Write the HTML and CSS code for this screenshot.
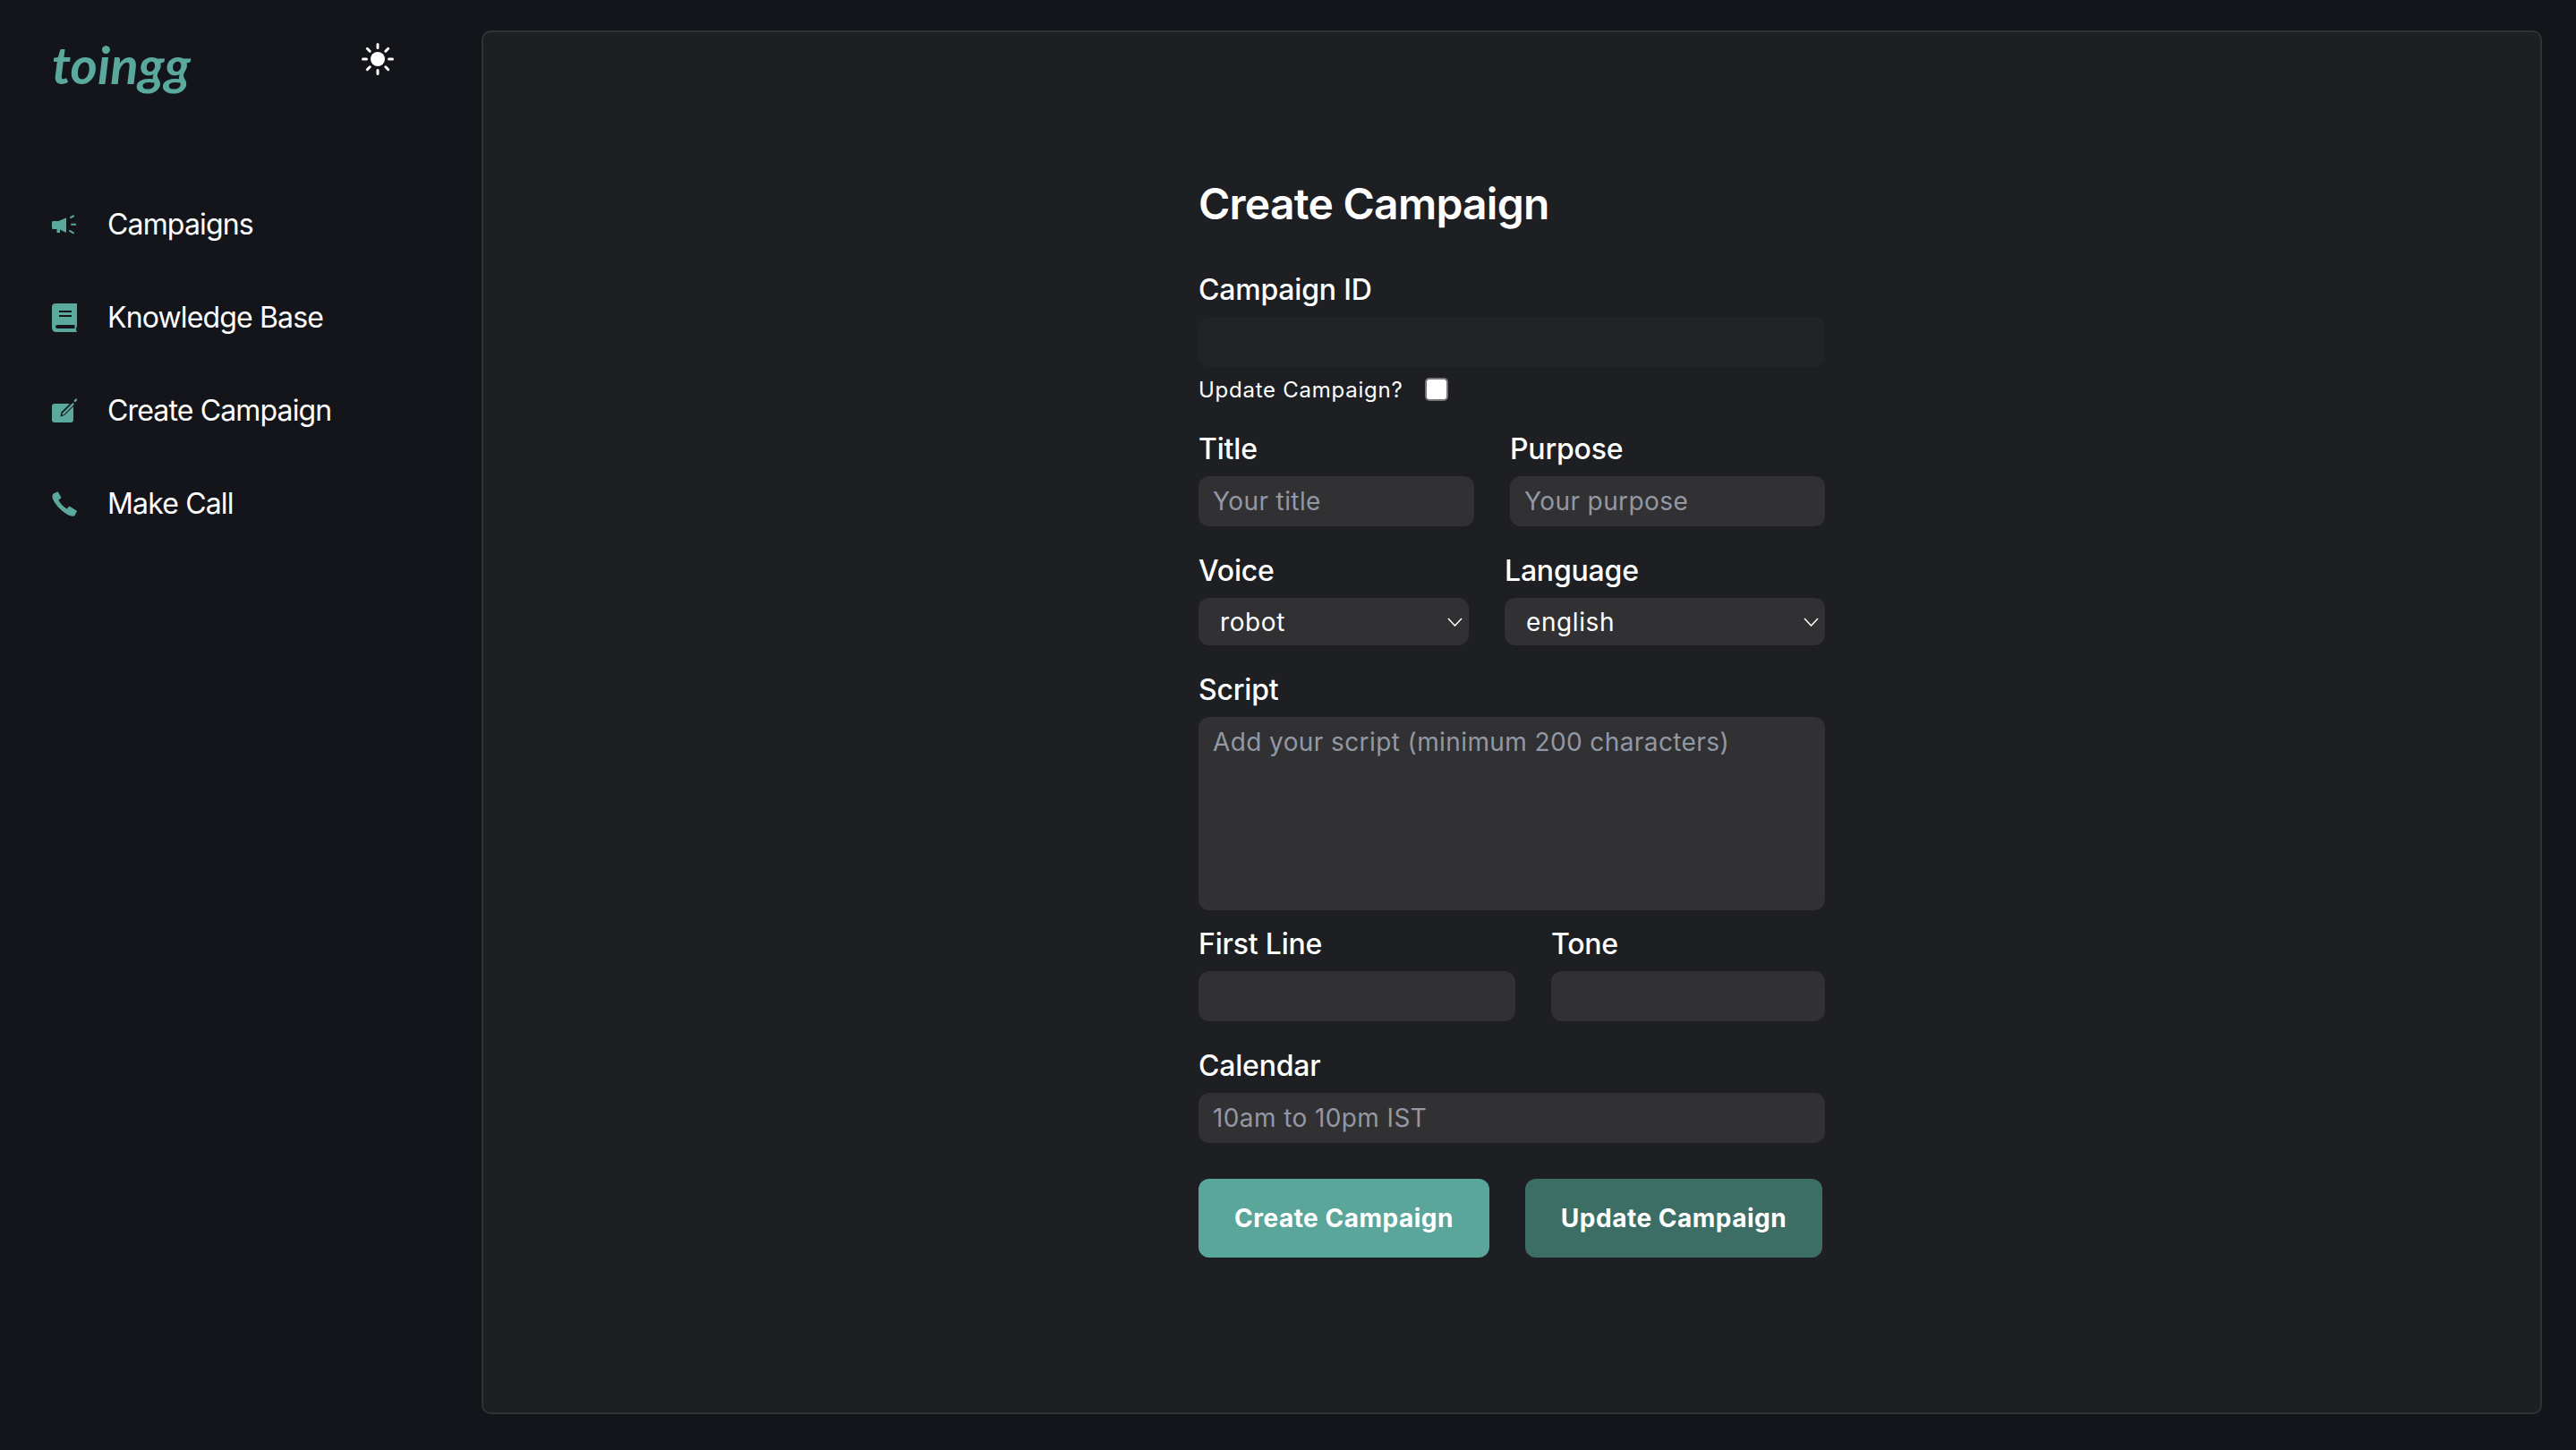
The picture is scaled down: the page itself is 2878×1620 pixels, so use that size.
FILE: index.html
```html
<!DOCTYPE html>
<html lang="en">
<head>
    <meta charset="UTF-8">
    <meta name="viewport" content="width=device-width, initial-scale=1.0">
    <title>toingg - Create Campaign</title>
    <link rel="stylesheet" href="styles.css">
</head>
<body>
    <div class="app">
        <aside class="sidebar">
            <div class="brand-row">
                <span class="logo">toingg</span>
                <svg class="sun" viewBox="0 0 36 36" aria-hidden="true">
                    <circle cx="18" cy="18" r="8" fill="#fff"/>
                    <g stroke="#fff" stroke-width="3" stroke-linecap="round">
                        <path d="M18 1.5v4M18 30.5v4M1.5 18h4M30.500 18h4M6.300 6.300l2.900 2.900M26.800 26.800l2.900 2.900M6.300 29.700l2.900-2.900M26.800 9.200l2.900-2.900"/>
                    </g>
                </svg>
            </div>
            <nav class="nav">
                <a class="nav-item">
                    <svg class="nav-icon" viewBox="0 0 28 28" aria-hidden="true">
                        <path class="fill" d="M1 10h6.500L16 6.300V23l-7-3.500V23H5.500v-4H1.500Q0 19 0 17.500v-6Q0 10 1 10z"/>
                        <path class="rays" d="M20.300 6.300L24.700 4M21.300 13.700H27M19.300 20.700l5.400 3"/>
                    </svg>
                    <span>Campaigns</span>
                </a>
                <a class="nav-item">
                    <svg class="nav-icon nav-icon-tall" viewBox="0 0 28 32" aria-hidden="true">
                        <path class="fill" d="M4 0h24v25.500q-1 1.500-1 3 0 1.500 1 3.500H5q-5 0-5-5V4q0-4 4-4z"/>
                        <path class="cut" d="M8 8h14v2H8zM8 13h14v2H8zM6 24h19.500v4H6q-2 0-2-2t2-2z"/>
                    </svg>
                    <span>Knowledge Base</span>
                </a>
                <a class="nav-item">
                    <svg class="nav-icon" viewBox="0 0 28 28" aria-hidden="true">
                        <rect class="fill" x="0" y="6" width="24" height="21" rx="3"/>
                        <path class="pen-edge" d="M9.500 20.500l1-5L22 4l3.500 3.500L14 19z"/>
                        <path class="pen-core" d="M12.500 17.500L23.500 6.500"/>
                        <path class="pen-tip" d="M25.800 2.800l1.200-1.200"/>
                    </svg>
                    <span>Create Campaign</span>
                </a>
                <a class="nav-item">
                    <svg class="nav-icon" viewBox="0 0 28 28" aria-hidden="true">
                        <path class="fill phone" d="M1.500 3L6.500 .8 10 7 6.800 9.800Q10 16 16.500 20L19.500 17 27.500 22 25 27Q22 27.800 18 25.800 6 19 1.200 8 .5 5 1.500 3z"/>
                    </svg>
                    <span>Make Call</span>
                </a>
            </nav>
        </aside>

        <main class="panel">
            <form class="form">
                <h1 class="form-title">Create Campaign</h1>

                <div class="field">
                    <label class="label">Campaign ID</label>
                    <input class="input input-disabled" type="text" disabled>
                </div>
                <div class="check-row">
                    <label class="check-label">Update Campaign?</label>
                    <span class="checkbox"></span>
                </div>

                <div class="row row-title">
                    <div class="field">
                        <label class="label">Title</label>
                        <input class="input" type="text" placeholder="Your title">
                    </div>
                    <div class="field">
                        <label class="label">Purpose</label>
                        <input class="input" type="text" placeholder="Your purpose">
                    </div>
                </div>

                <div class="row row-voice">
                    <div class="field">
                        <label class="label">Voice</label>
                        <select class="select"><option>robot</option></select>
                    </div>
                    <div class="field">
                        <label class="label">Language</label>
                        <select class="select"><option>english</option></select>
                    </div>
                </div>

                <div class="field field-script">
                    <label class="label">Script</label>
                    <textarea class="input textarea" placeholder="Add your script (minimum 200 characters)"></textarea>
                </div>

                <div class="row row-first">
                    <div class="field">
                        <label class="label">First Line</label>
                        <input class="input" type="text">
                    </div>
                    <div class="field">
                        <label class="label">Tone</label>
                        <input class="input" type="text">
                    </div>
                </div>

                <div class="field field-calendar">
                    <label class="label">Calendar</label>
                    <input class="input" type="text" placeholder="10am to 10pm IST">
                </div>

                <div class="actions">
                    <button class="btn btn-create" type="button">Create Campaign</button>
                    <button class="btn btn-update" type="button">Update Campaign</button>
                </div>
            </form>
        </main>
    </div>
</body>
</html>
```

FILE: styles.css
```css
* {
    margin: 0;
    padding: 0;
    box-sizing: border-box;
}

html, body {
    height: 100%;
}

body {
    font-family: Inter, 'Liberation Sans', sans-serif;
    color: #fff;
    background: #13151a;
    overflow: hidden;
}

.app {
    display: flex;
    height: 100vh;
    padding: 34px 38px 40px 0;
}

.sidebar {
    width: 538px;
    flex-shrink: 0;
    padding-left: 58px;
}

.brand-row {
    display: flex;
    align-items: flex-start;
    justify-content: space-between;
    width: 382px;
    height: 66px;
}

.logo {
    margin-top: 8px;
    font-family: Lato, sans-serif;
    font-style: italic;
    font-weight: 700;
    font-size: 58px;
    line-height: 60px;
    color: #5aa99c;
}

.sun {
    width: 36px;
    height: 36px;
    margin-top: 14px;
}

.nav {
    display: flex;
    flex-direction: column;
    margin-top: 99px;
}

.nav-item {
    display: flex;
    align-items: center;
    gap: 34px;
    height: 104px;
    font-size: 32px;
    line-height: 48px;
    letter-spacing: -0.85px;
}

.nav-icon {
    width: 28px;
    height: 28px;
    flex-shrink: 0;
}

.nav-icon-tall {
    height: 32px;
}

.fill {
    fill: #5aa99c;
}

.rays {
    fill: none;
    stroke: #5aa99c;
    stroke-width: 2;
}

.cut {
    fill: #13151a;
}

.pen-edge {
    fill: #13151a;
}

.pen-core, .pen-tip {
    fill: none;
    stroke: #5aa99c;
    stroke-width: 2.4;
    stroke-linecap: round;
}

.phone {
    stroke: #5aa99c;
    stroke-width: 1;
    stroke-linejoin: round;
}

.panel {
    flex: 1;
    display: flex;
    justify-content: center;
    align-items: flex-start;
    padding-top: 158px;
    background: #1d1f23;
    border: 2px solid #303236;
    border-radius: 10px;
}

.form {
    width: 700px;
}

.form-title {
    font-size: 48px;
    line-height: 68px;
    font-weight: 600;
    letter-spacing: -0.75px;
    margin-bottom: 36px;
}

.field {
    display: flex;
    flex-direction: column;
}

.label {
    font-size: 32px;
    line-height: 52px;
    font-weight: 450;
    letter-spacing: -0.2px;
    margin-bottom: 4px;
}

.input, .select {
    width: 100%;
    height: 56px;
    border: none;
    outline: none;
    border-radius: 12px;
    background-color: #313133;
    color: #fff;
    font-family: Inter, 'Liberation Sans', sans-serif;
    font-size: 28px;
    letter-spacing: 0.4px;
    padding: 0 16px;
}

.input::placeholder {
    color: #9298a4;
    opacity: 1;
}

.input-disabled {
    background-color: #222326;
}

.select {
    height: 53px;
    padding: 0 24px;
    letter-spacing: 0.6px;
    appearance: none;
    background-image: url("data:image/svg+xml,%3Csvg xmlns='http://www.w3.org/2000/svg' width='17' height='10' viewBox='0 0 17 10'%3E%3Cpath d='M1 1l7.500 8L16 1' fill='none' stroke='%23fff' stroke-width='1.500'/%3E%3C/svg%3E");
    background-repeat: no-repeat;
    background-position: right 7px center;
}

.textarea {
    display: block;
    height: 216px;
    padding: 8px 16px;
    line-height: 40px;
    resize: none;
}

.check-row {
    display: flex;
    align-items: center;
    gap: 24px;
    height: 26px;
    margin: 12px 0 28px;
}

.check-label {
    font-size: 24px;
    letter-spacing: 0.75px;
}

.checkbox {
    width: 26px;
    height: 26px;
    background: #fff;
    border: 2px solid #767676;
    border-radius: 5px;
}

.row {
    display: grid;
    column-gap: 40px;
    margin-bottom: 24px;
}

.row-title {
    grid-template-columns: 308px 352px;
}

.row-voice {
    grid-template-columns: 302px 358px;
}

.row-first {
    grid-template-columns: 354px 306px;
}

.field-script {
    margin-bottom: 12px;
}

.field-calendar {
    margin-bottom: 40px;
}

.actions {
    display: flex;
    gap: 40px;
}

.btn {
    height: 88px;
    padding: 0 40px;
    border: none;
    border-radius: 12px;
    color: #fff;
    font-family: Inter, 'Liberation Sans', sans-serif;
    font-size: 28px;
    font-weight: 700;
    letter-spacing: 0.5px;
    white-space: nowrap;
}

.btn-create {
    background: #5aa69b;
}

.btn-update {
    background: #3d6e66;
}
```
